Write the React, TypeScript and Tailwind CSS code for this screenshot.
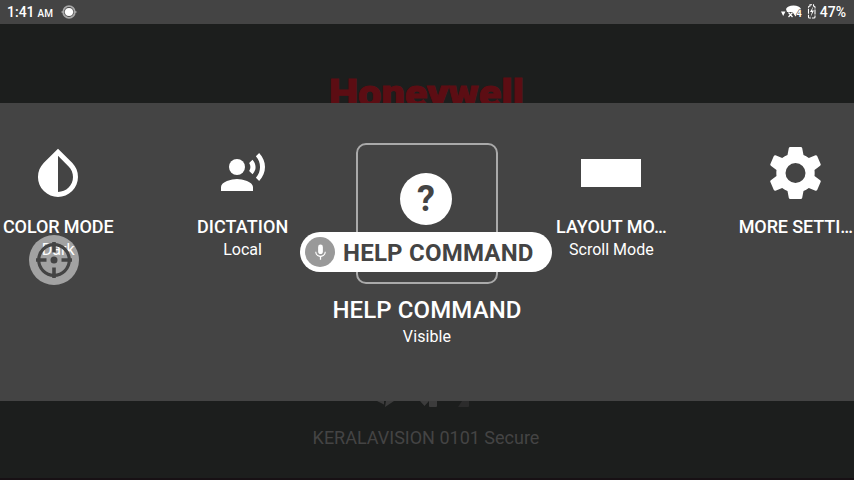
import type { ReactNode } from "react";

function DropIcon() {
  return (
    <svg viewBox="0 0 24 24" className="size-[60px]" fill="white">
      <path
        fillRule="evenodd"
        d="M17.66 7.93L12 2.27 6.34 7.93c-3.12 3.12-3.12 8.19 0 11.31C7.9 20.8 9.95 21.58 12 21.58s4.1-.78 5.66-2.34c3.12-3.12 3.12-8.19 0-11.31zM12 19.59c1.6 0 3.11-.62 4.24-1.76C17.38 16.69 18 15.19 18 13.59s-.62-3.11-1.76-4.24L12 5.1z"
      />
    </svg>
  );
}

function VoiceIcon() {
  return (
    <svg viewBox="0 0 24 24" className="size-12" fill="white">
      <circle cx="9" cy="9" r="4" />
      <path d="M9 15c-2.67 0-8 1.34-8 4v2h16v-2c0-2.66-5.33-4-8-4zm7.76-9.64l-1.68 1.69c.84 1.18.84 2.71 0 3.89l1.68 1.69c2.02-2.02 2.02-5.07 0-7.27zM20.07 2l-1.63 1.63c2.77 3.02 2.77 7.56 0 10.74L20.07 16c3.9-3.89 3.91-9.95 0-14z" />
    </svg>
  );
}

function GearIcon() {
  return (
    <svg viewBox="-76 -78 152 156" className="h-[52px] w-[51px]" fill="white">
      <path
        fillRule="evenodd"
        d="M-16-78H16Q19-78 20-75L24-54Q32-51 40-45L60-53Q63-54 65-51L75-28Q77-25 74-22L57-9Q58 0 57 9L74 22Q77 25 75 28L65 51Q63 54 60 53L40 45Q32 51 24 54L20 75Q19 78 16 78H-16Q-19 78-20 75L-24 54Q-32 51-40 45L-60 53Q-63 54-65 51L-75 28Q-77 25-74 22L-57 9Q-58 0-57-9L-74-22Q-77-25-75-28L-65-51Q-63-54-60-53L-40-45Q-32-51-24-54L-20-75Q-19-78-16-78ZM0-30A30 30 0 1 0 0 30A30 30 0 1 0 0-30Z"
      />
    </svg>
  );
}

function Item({
  icon,
  label,
  value,
  tracking = "tracking-normal",
}: {
  icon: ReactNode;
  label: string;
  value?: string;
  tracking?: string;
}) {
  return (
    <div className="flex w-[184.4px] shrink-0 flex-col items-center pt-10">
      <div className="flex h-[60px] items-center justify-center">{icon}</div>
      <div className={`mt-3 h-6 text-lg leading-6 font-medium whitespace-nowrap ${tracking}`}>{label}</div>
      <div className="h-[22px] text-base leading-[22px]">{value}</div>
    </div>
  );
}

function StatusBar() {
  return (
    <div className="flex h-6 items-center justify-between bg-[#444444] pr-2 pl-[7px] text-sm leading-6 font-medium">
      <div className="flex items-center">
        <span>1:41</span>
        <span className="ml-[3px] pt-[3px] text-[10px]">AM</span>
        <svg viewBox="0 0 16 16" className="ml-2 size-4" fill="none">
          <circle cx="8" cy="8" r="5.8" stroke="#a8a8a8" strokeWidth="1.8" />
          <circle cx="8" cy="8" r="4.1" fill="white" />
          <path d="M0.500 8h3M12.500 8h3" stroke="#a8a8a8" strokeWidth="1.5" />
        </svg>
      </div>
      <div className="flex items-center">
        <svg viewBox="0 0 38 18" className="mr-[2px] h-[18px] w-[38px]" fill="white">
          <path d="M1 8.500h4.500L3.200 13z" />
          <path d="M6 6Q7.500 2.500 13.500 2.500T21 6L19.500 9 15.500 13.500 12.500 9H7z" />
          <path d="M8.500 9.500l4 4.500M12.500 9.500l-4 4.500" stroke="white" strokeWidth="1.200" />
          <text x="16.500" y="14" fontSize="9" fontFamily="Roboto, sans-serif" fontWeight="700" stroke="#444444" strokeWidth="1.200" paintOrder="stroke">4</text>
          <path d="M28.500 4Q28.500 3 30 3V1.800h3.500V3Q35 3 35 4V14Q35 15 34 15h-4.500Q28.500 15 28.500 14z" fill="none" stroke="white" strokeWidth="1.100" strokeDasharray="5 1" />
          <path d="M33.500 3l-3.500 6h2l-1.500 5 3.500-6.500h-2z" />
        </svg>
        <span>47%</span>
      </div>
    </div>
  );
}

export default function App() {
  return (
    <div className="relative flex h-[480px] w-[854px] flex-col overflow-hidden bg-[#1c1e1d] font-['Roboto',sans-serif] text-white">
      <StatusBar />
      <div className="flex h-[79px] justify-center overflow-hidden pt-[46px]">
        <svg viewBox="0 0 194 44" className="h-11 w-[194px] shrink-0 overflow-visible">
          <text x="-1" y="36.5" textLength="195" lengthAdjust="spacingAndGlyphs" fontFamily="Roboto, sans-serif" fontSize="38.5" fontWeight="900" fill="#5c0d13" stroke="#5c0d13" strokeWidth="1">
            Honeywell
          </text>
        </svg>
      </div>

      <div className="relative flex h-[298px] justify-center bg-[#444444]">
        <Item icon={<DropIcon />} label="COLOR MODE" value="Dark" tracking="tracking-[-0.1px]" />
        <Item icon={<VoiceIcon />} label="DICTATION" value="Local" tracking="tracking-[0.1px]" />
        <div className="flex w-[184.4px] shrink-0 flex-col items-center pt-10">
          <div className="flex h-[141px] w-[142px] justify-center rounded-[10px] border-2 border-[#aaaaaa] pt-[27.5px]">
            <div className="mr-[2px] flex size-[52px] items-center justify-center rounded-full bg-white text-[36px] leading-[52px] font-bold text-[#444444]">
              ?
            </div>
          </div>
          <div className="mt-2.5 text-2xl leading-8 font-medium tracking-[0.12px] whitespace-nowrap">HELP COMMAND</div>
          <div className="text-base leading-[22px] tracking-[0.1px]">Visible</div>
        </div>
        <Item icon={<div className="h-7 w-[60px] bg-white" />} label="LAYOUT MO…" value="Scroll Mode" />
        <Item icon={<GearIcon />} label="MORE SETTI…" tracking="tracking-[-0.1px]" />

        <div className="absolute top-[129px] left-[300px] flex h-10 w-[252px] items-center rounded-full bg-white pl-[5px] text-[#444444]">
          <div className="flex size-[30px] items-center justify-center rounded-full bg-[#999999]">
            <svg viewBox="0 0 24 24" className="size-[19px]" fill="white">
              <path d="M12 14c1.660 0 3-1.340 3-3V5a3 3 0 0 0-6 0v6c0 1.660 1.340 3 3 3zm5.300-3c0 3-2.540 5.100-5.300 5.100S6.700 14 6.700 11H5.300c0 3.300 2.500 6.100 5.900 6.600V21h1.600v-3.400c3.400-.5 5.900-3.300 5.900-6.600z" />
            </svg>
          </div>
          <span className="ml-2 pt-px text-2xl font-bold tracking-[0.22px] whitespace-nowrap">HELP COMMAND</span>
        </div>

        <svg viewBox="0 0 50 50" className="absolute top-[132px] left-[29px] size-[50px]" fill="none">
          <circle cx="25" cy="25" r="25" fill="white" fillOpacity=".5" />
          <g stroke="#444444">
            <circle cx="25" cy="25" r="15.300" strokeWidth="3.200" />
            <path d="M25 7v10.500M25 32.500v10.500M7 25h10.500M32.500 25h10.500" strokeWidth="3.600" />
          </g>
          <circle cx="25" cy="25" r="3.500" fill="#444444" />
        </svg>
      </div>

      <div className="flex h-[77px] flex-col items-center bg-[#1c1e1d]">
        <svg viewBox="0 0 104 8" className="h-2 w-[104px]" fill="#3c3c3c">
          <path d="M2 0h7v3.500zM11 0h8L10 6zM45 0h9L49.500 5zM54 0h8v5q0 1-1 1h-6q-1 0-1-1z" />
          <path d="M87 0h7v5q0 1-1 1h-10z" fill="#2b2b2b" />
        </svg>
        <div className="mt-[17px] mr-[2px] text-lg leading-6 text-[#444444]">KERALAVISION 0101 Secure</div>
      </div>
      <div className="h-[2px] bg-[#171014]" />
    </div>
  );
}
